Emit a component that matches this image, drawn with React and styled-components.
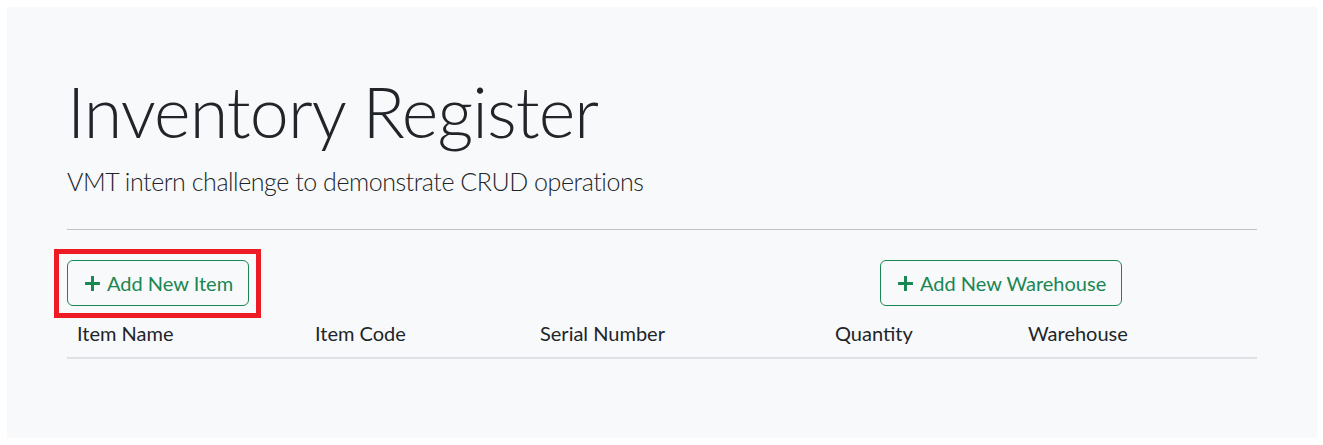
import React from 'react';
import styled, { createGlobalStyle } from 'styled-components';

const GlobalStyle = createGlobalStyle`
  html, body {
    margin: 0;
    padding: 0;
    background: #ffffff;
  }
  body {
    font-family: Lato, "Open Sans", "Noto Sans", sans-serif;
    color: #212529;
    -webkit-font-smoothing: antialiased;
  }
  *, *::before, *::after { box-sizing: border-box; }
`;

const Jumbotron = styled.main`
  margin: 7px 6px 7px 7px;
  height: 431px;
  background: #f8f9fa;
  padding: 62px 60px 0 60px;
  display: flex;
  flex-direction: column;
`;

const Title = styled.h1`
  margin: 0 0 9px 0;
  font-size: 70px;
  line-height: 84px;
  font-weight: 300;
  letter-spacing: -0.9px;
  color: #212529;
`;

const Lead = styled.p`
  margin: 0;
  font-size: 25px;
  line-height: 38px;
  font-weight: 300;
  letter-spacing: -0.45px;
  color: #212529;
`;

const Divider = styled.hr`
  margin: 29px 0 0 0;
  border: 0;
  border-top: 1px solid #c2c4c6;
  height: 0;
`;

const ActionRow = styled.div`
  margin-top: 30px;
  display: grid;
  grid-template-columns: 813px auto;
  align-items: start;
  justify-items: start;
`;

const Highlight = styled.div`
  position: relative;
  &::after {
    content: '';
    position: absolute;
    left: -13px;
    right: -12px;
    top: -11px;
    bottom: -12px;
    border: 5px solid #ed1c24;
    pointer-events: none;
  }
`;

const OutlineButton = styled.button`
  display: inline-flex;
  align-items: center;
  gap: 6px;
  height: 46px;
  padding: 7px 15px;
  border: 1px solid #198754;
  border-radius: 6px;
  background: transparent;
  color: #198754;
  font-family: inherit;
  font-size: 20px;
  line-height: 30px;
  font-weight: 400;
  cursor: pointer;
  white-space: nowrap;
`;

const PlusIcon = styled.svg`
  width: 17px;
  height: 17px;
  flex: none;
  margin-left: 1px;
`;

const Table = styled.div`
  margin-top: 2px;
  display: grid;
  grid-template-columns: 238px 225px 295px 193px 1fr;
  border-bottom: 2px solid #dee2e6;
`;

const HeaderCell = styled.div`
  padding: 10px 10px 9px 10px;
  font-size: 20px;
  line-height: 30px;
  font-weight: 400;
  color: #212529;
  white-space: nowrap;
`;

const Plus = () => (
  <PlusIcon viewBox="0 0 16 16" aria-hidden="true">
    <path d="M8 1v14M1 8h14" stroke="currentColor" strokeWidth="2.8" fill="none" />
  </PlusIcon>
);

const columns = ['Item Name', 'Item Code', 'Serial Number', 'Quantity', 'Warehouse'];

export default function App() {
  return (
    <>
      <GlobalStyle />
      <Jumbotron>
        <Title>Inventory Register</Title>
        <Lead>VMT intern challenge to demonstrate CRUD operations</Lead>
        <Divider />
        <ActionRow>
          <Highlight>
            <OutlineButton type="button">
              <Plus />
              Add New Item
            </OutlineButton>
          </Highlight>
          <OutlineButton type="button">
            <Plus />
            Add New Warehouse
          </OutlineButton>
        </ActionRow>
        <Table>
          {columns.map((c) => (
            <HeaderCell key={c}>{c}</HeaderCell>
          ))}
        </Table>
      </Jumbotron>
    </>
  );
}
